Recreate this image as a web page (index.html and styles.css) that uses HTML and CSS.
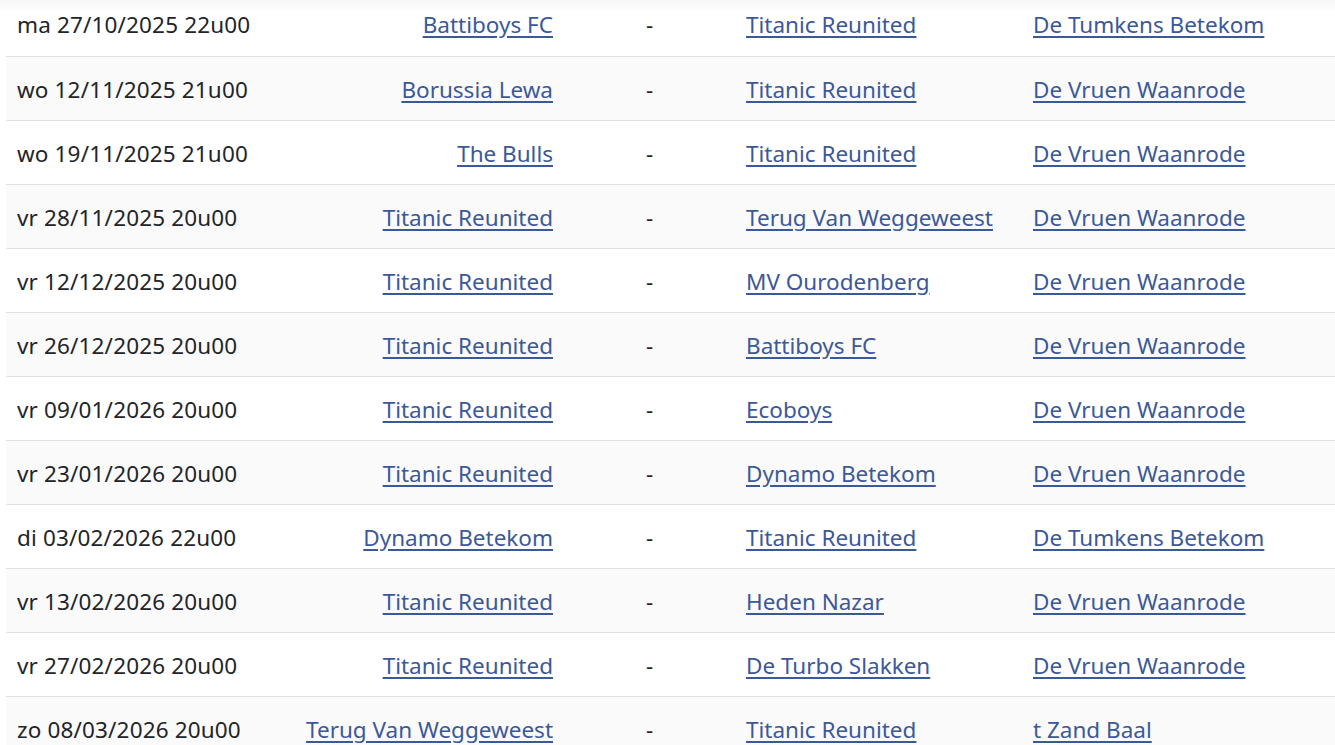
FILE: index.html
```html
<!DOCTYPE html>
<html lang="nl">
<head>
<meta charset="utf-8">
<title>Kalender</title>
<link rel="stylesheet" href="styles.css">
</head>
<body>
<div class="top-shade"></div>
<div class="wrap">
<table class="games">
<colgroup>
<col class="c-date"><col class="c-home"><col class="c-sep"><col class="c-away"><col class="c-loc">
</colgroup>
<tbody>
<tr><td class="date">ma 27/10/2025 22u00</td><td class="home"><a href="#">Battiboys FC</a></td><td class="sep">-</td><td><a href="#">Titanic Reunited</a></td><td><a href="#">De Tumkens Betekom</a></td></tr>
<tr><td class="date">wo 12/11/2025 21u00</td><td class="home"><a href="#">Borussia Lewa</a></td><td class="sep">-</td><td><a href="#">Titanic Reunited</a></td><td><a href="#">De Vruen Waanrode</a></td></tr>
<tr><td class="date">wo 19/11/2025 21u00</td><td class="home"><a href="#">The Bulls</a></td><td class="sep">-</td><td><a href="#">Titanic Reunited</a></td><td><a href="#">De Vruen Waanrode</a></td></tr>
<tr><td class="date">vr 28/11/2025 20u00</td><td class="home"><a href="#">Titanic Reunited</a></td><td class="sep">-</td><td><a href="#">Terug Van Weggeweest</a></td><td><a href="#">De Vruen Waanrode</a></td></tr>
<tr><td class="date">vr 12/12/2025 20u00</td><td class="home"><a href="#">Titanic Reunited</a></td><td class="sep">-</td><td><a href="#">MV Ourodenberg</a></td><td><a href="#">De Vruen Waanrode</a></td></tr>
<tr><td class="date">vr 26/12/2025 20u00</td><td class="home"><a href="#">Titanic Reunited</a></td><td class="sep">-</td><td><a href="#">Battiboys FC</a></td><td><a href="#">De Vruen Waanrode</a></td></tr>
<tr><td class="date">vr 09/01/2026 20u00</td><td class="home"><a href="#">Titanic Reunited</a></td><td class="sep">-</td><td><a href="#">Ecoboys</a></td><td><a href="#">De Vruen Waanrode</a></td></tr>
<tr><td class="date">vr 23/01/2026 20u00</td><td class="home"><a href="#">Titanic Reunited</a></td><td class="sep">-</td><td><a href="#">Dynamo Betekom</a></td><td><a href="#">De Vruen Waanrode</a></td></tr>
<tr><td class="date">di 03/02/2026 22u00</td><td class="home"><a href="#">Dynamo Betekom</a></td><td class="sep">-</td><td><a href="#">Titanic Reunited</a></td><td><a href="#">De Tumkens Betekom</a></td></tr>
<tr><td class="date">vr 13/02/2026 20u00</td><td class="home"><a href="#">Titanic Reunited</a></td><td class="sep">-</td><td><a href="#">Heden Nazar</a></td><td><a href="#">De Vruen Waanrode</a></td></tr>
<tr><td class="date">vr 27/02/2026 20u00</td><td class="home"><a href="#">Titanic Reunited</a></td><td class="sep">-</td><td><a href="#">De Turbo Slakken</a></td><td><a href="#">De Vruen Waanrode</a></td></tr>
<tr><td class="date">zo 08/03/2026 20u00</td><td class="home"><a href="#">Terug Van Weggeweest</a></td><td class="sep">-</td><td><a href="#">Titanic Reunited</a></td><td><a href="#">t Zand Baal</a></td></tr>
</tbody>
</table>
</div>
</body>
</html>
```
FILE: styles.css
```css
html, body {
  margin: 0;
  padding: 0;
  background: #ffffff;
  overflow: hidden;
}
body {
  font-family: "Noto Sans", "Open Sans", sans-serif;
  font-size: 22.5px;
  color: #212529;
}
.top-shade {
  position: fixed;
  top: 0;
  left: 0;
  right: 0;
  height: 12px;
  background: linear-gradient(to bottom, rgba(0,0,0,0.035), rgba(0,0,0,0));
  pointer-events: none;
}
.wrap {
  padding-left: 6px;
  margin-top: -8px;
}
.games {
  width: 1329px;
  border-collapse: collapse;
  table-layout: fixed;
}
.c-date { width: 284px; }
.c-home { width: 274px; }
.c-sep { width: 171px; }
.c-away { width: 287px; }
.c-loc { width: 313px; }
.games td {
  height: 61px;
  padding: 2px 11px 0;
  line-height: 30px;
  border-top: 1px solid #dee2e6;
  white-space: nowrap;
  vertical-align: middle;
}
.games td.date { letter-spacing: 0.15px; }
.games tr:first-child td { border-top: none; height: 62px; }
.games tr:nth-child(even) td { background: #fafafa; }
.games td.home { text-align: right; }
.games td.sep { text-align: center; }
.games a {
  color: #3b5998;
  text-decoration: underline;
  text-underline-offset: 3px;
}
```
